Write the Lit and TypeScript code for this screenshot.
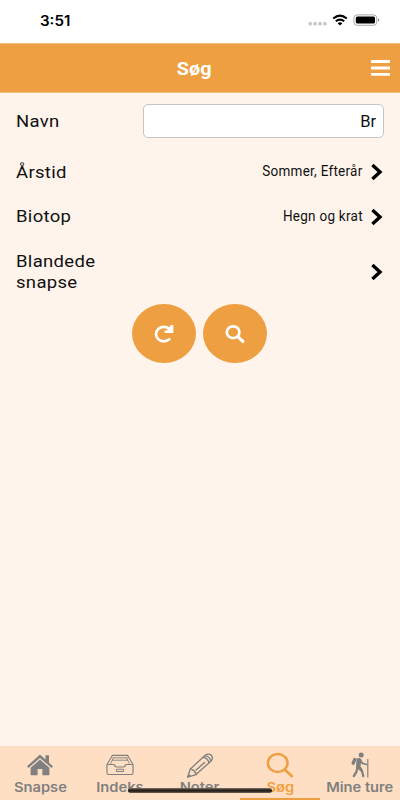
import { LitElement, html, css, svg } from "lit";
import { customElement } from "lit/decorators.js";
import { classMap } from "lit/directives/class-map.js";

const chevron = html`<svg class="chevron" width="13" height="18" viewBox="0 0 13 18">
  <path d="M1.4 2L9 9L1.4 16" fill="none" stroke="#000" stroke-width="3.4" stroke-linejoin="miter"/>
</svg>`;

const house = svg`<path fill="#808080" d="M1 13.3L14 1.6L19.5 6.5V2.3H23V9.7L27 13.3L25.6 15L14 4.9L2.4 15Z"/>
  <path fill="#808080" d="M14 6.6L23.4 14.8V22.2H16.4V16H11.6V22.2H4.6V14.8Z"/>`;

const tray = svg`<g fill="none" stroke="#808080" stroke-width="1.15" stroke-linejoin="round">
  <path d="M1 11.5L5.2 4.5L6.4 2.4H21.6L22.8 4.5L27 11.5H19.8Q19 14 17.5 14H10.5Q9 14 8.2 11.5H1V20Q1 21.5 2.5 21.5H25.5Q27 21.5 27 20V11.5"/>
  <path d="M7 4.8H21.4 M6.4 7.2H21.8 M7.4 4.6L4.8 10.6 M20.6 4.6L23.2 10.6" stroke-width=".9"/>
  <rect x="10.4" y="16.2" width="7.2" height="2.3" rx="1.1"/></g>`;

const pencil = svg`<g fill="none" stroke="#808080" stroke-width="1.35" stroke-linejoin="round" stroke-linecap="round">
  <path d="M1.6 24.2L4.4 15.9L19.2 2.3Q22.5 -.1 25.2 2.3Q27.7 5 25 8.1L10 21.6Z"/>
  <path d="M4.4 15.9Q5.8 15.6 6.7 17.3Q8.6 16.8 8.5 19Q10.3 19.3 10 21.6M17.2 4.3Q21.8 4.8 22.9 9.8M19.1 2.6Q23.7 3.3 24.8 8.2M10.2 17L18.6 9.4"/></g>
  <path fill="#808080" d="M1.3 24.6L2.5 20.6L5.4 23.3Z"/>`;

const loupe = svg`<g fill="none" stroke="#ee9f41" stroke-linecap="round">
  <ellipse cx="11.7" cy="10" rx="9.8" ry="9" stroke-width="2.5"/>
  <path d="M18.7 16.7L25.8 23" stroke-width="2.8"/></g>`;

const hiker = svg`<g fill="none" stroke="#808080" stroke-linecap="round" stroke-linejoin="round">
  <circle cx="15.2" cy="1.9" r="2.5" fill="#808080" stroke="none"/>
  <path fill="#808080" stroke="none" d="M10.6 5.4Q13.6 4.4 15.4 6.2L14.6 13.4L16.6 16.6L15 18.6L10 14.6Z"/>
  <path d="M14.4 7.4L16.6 10.4L20.6 11.5" stroke-width="1.8"/>
  <path d="M13.4 15L16 18L17.3 23.2" stroke-width="2.2"/>
  <path d="M11.2 15.5L10.4 19L7.8 23" stroke-width="2.3"/>
  <path d="M8.7 6.6L7.2 10.2" stroke-width="3.4"/>
  <path d="M21.8 6.6V24" stroke-width="1.2"/></g>`;

const tabs = [
  { id: "home", label: "Snapse", icon: house },
  { id: "index", label: "Indeks", icon: tray },
  { id: "notes", label: "Noter", icon: pencil },
  { id: "search", label: "Søg", icon: loupe },
  { id: "trips", label: "Mine ture", icon: hiker },
];

@customElement("app-root")
export class AppRoot extends LitElement {
  static styles = css`
    :host {
      display: flex;
      flex-direction: column;
      position: relative;
      width: 400px;
      height: 800px;
      overflow: hidden;
      background: #fff4eb;
      color: #111;
      font-family: Roboto, sans-serif;
    }
    * { box-sizing: border-box; }
    svg { display: block; flex: none; overflow: visible; }
    .status {
      flex: none;
      height: 43px;
      background: #fff;
      display: flex;
      justify-content: space-between;
      padding: 11px 20px 0 40px;
    }
    .time {
      font: 600 14px/19px Inter, sans-serif;
      transform: scaleX(1.08);
      transform-origin: left;
      color: #000;
    }
    .header {
      flex: none;
      height: 50px;
      background: #ee9f41;
      border-top: 1px solid #f3bd7c;
      border-bottom: 1px solid #f3bd7c;
      display: grid;
      grid-template-columns: 1fr auto 1fr;
      align-items: center;
      padding: 0 10px;
    }
    .title {
      grid-column: 2;
      margin: 1px 0 0 -11px;
      color: #fff;
      font-size: 18.5px;
      line-height: 24px;
      font-weight: 700;
      transform: scaleX(1.07);
    }
    .menu { justify-self: end; }
    .form {
      flex: 1;
      padding: 11px 16px 0;
      display: flex;
      flex-direction: column;
    }
    .row { display: flex; align-items: center; justify-content: space-between; }
    .name { height: 34px; }
    .season { height: 44px; margin-top: 12px; }
    .biotope { height: 45px; }
    .mixed { height: 66px; }
    .label {
      width: 96px;
      font-size: 17.3px;
      line-height: 20.6px;
      letter-spacing: 0.3px;
      transform: scaleX(1.07);
      transform-origin: left;
    }
    .field {
      width: 241px;
      height: 34px;
      border: 1px solid #c5c5c5;
      border-radius: 5px;
      background: #fff;
      padding: 0 7px;
      text-align: right;
      font: 16.5px/30px Roboto, sans-serif;
      color: #111;
    }
    .value { display: flex; align-items: center; gap: 8px; }
    .choice {
      font-size: 15px;
      line-height: 20px;
      margin-bottom: 2px;
      letter-spacing: 0.3px;
      transform: scaleX(0.9);
      transform-origin: right;
      white-space: nowrap;
    }
    .actions { display: flex; justify-content: center; gap: 7px; margin: -1px 2px 0 0; }
    .round {
      width: 64px;
      height: 59px;
      padding: 0;
      border: 0;
      border-radius: 50%;
      background: #ee9f41;
      display: grid;
      place-items: center;
    }
    .tabs {
      flex: none;
      height: 54px;
      background: #ffdfc4;
      display: grid;
      grid-template-columns: repeat(5, 80px);
    }
    .tab {
      display: flex;
      flex-direction: column;
      align-items: center;
      padding-top: 7px;
      color: #808080;
      border-bottom: 2px solid transparent;
    }
    .caption {
      margin-top: 1px;
      font: 600 13px/17px Inter, sans-serif;
      transform: scaleX(1.13);
      white-space: nowrap;
    }
    .active { color: #ee9f41; border-color: #ee9f41; }
    .indicator {
      position: absolute;
      left: 128px;
      top: 788px;
      width: 144px;
      height: 5px;
      border-radius: 3px;
      background: linear-gradient(#84756a, #211c18 45%, #2b2520 65%, #75675c);
    }
  `;

  render() {
    return html`
      <div class="status">
        <div class="time">3:51</div>
        <svg width="72" height="20" viewBox="308 11 72 20">
          <g fill="#c8c8c8"><circle cx="310.2" cy="23.7" r="1.9"/><circle cx="315.1" cy="23.7" r="1.9"/><circle cx="320" cy="23.7" r="1.9"/><circle cx="324.9" cy="23.7" r="1.9"/></g>
          <g fill="none" stroke="#000" stroke-width="2.1"><path d="M333.2 18.5Q340 12.7 346.8 18.5"/><path d="M335.8 21.3Q340 17.8 344.2 21.3"/></g>
          <path d="M337.6 23.2Q340 21.4 342.4 23.2L340 25.4Z"/>
          <rect x="353.9" y="14.9" width="22.9" height="10.4" rx="3.2" fill="#fff" stroke="#a9a9a9"/>
          <rect x="355.8" y="16.6" width="19.2" height="7" rx="1.5"/>
          <path d="M378 18.3Q380.2 20 378 21.8Z" fill="#777"/>
        </svg>
      </div>
      <div class="header">
        <h1 class="title">Søg</h1>
        <svg class="menu" width="19" height="16" viewBox="0 0 19 16">
          <g fill="#fff"><rect width="19" height="2.9" rx=".5"/><rect y="6.5" width="19" height="2.9" rx=".5"/><rect y="12.9" width="19" height="2.9" rx=".5"/></g>
        </svg>
      </div>
      <div class="form">
        <div class="row name"><span class="label">Navn</span><input class="field" .value=${"Br"} /></div>
        <div class="row season"><span class="label">Årstid</span><span class="value"><span class="choice">Sommer, Efterår</span>${chevron}</span></div>
        <div class="row biotope"><span class="label">Biotop</span><span class="value"><span class="choice">Hegn og krat</span>${chevron}</span></div>
        <div class="row mixed"><span class="label">Blandede snapse</span>${chevron}</div>
        <div class="actions">
          <button class="round">
            <svg width="20" height="18" viewBox="0 0 20 18">
              <path d="M15.3 14.2A7.8 7.2 0 1 1 15.5 4.2" fill="none" stroke="#fff" stroke-width="2.7" stroke-linecap="round"/>
              <path d="M16.7 0H19.3V8H10.6V5.4H13.2Z" fill="#fff"/>
            </svg>
          </button>
          <button class="round">
            <svg width="20" height="18" viewBox="0 0 20 18">
              <ellipse cx="8.1" cy="7.2" rx="6.3" ry="5.9" fill="none" stroke="#fff" stroke-width="2.7"/>
              <path d="M12.8 11.6L17.9 16.4" stroke="#fff" stroke-width="3.3" stroke-linecap="round"/>
            </svg>
          </button>
        </div>
      </div>
      <div class="tabs">
        ${tabs.map(
          (t) => html`<div class=${classMap({ tab: true, active: t.id === "search" })}>
            <svg width="28" height="25" viewBox="0 0 28 25">${t.icon}</svg>
            <span class="caption">${t.label}</span>
          </div>`
        )}
      </div>
      <div class="indicator"></div>
    `;
  }
}
